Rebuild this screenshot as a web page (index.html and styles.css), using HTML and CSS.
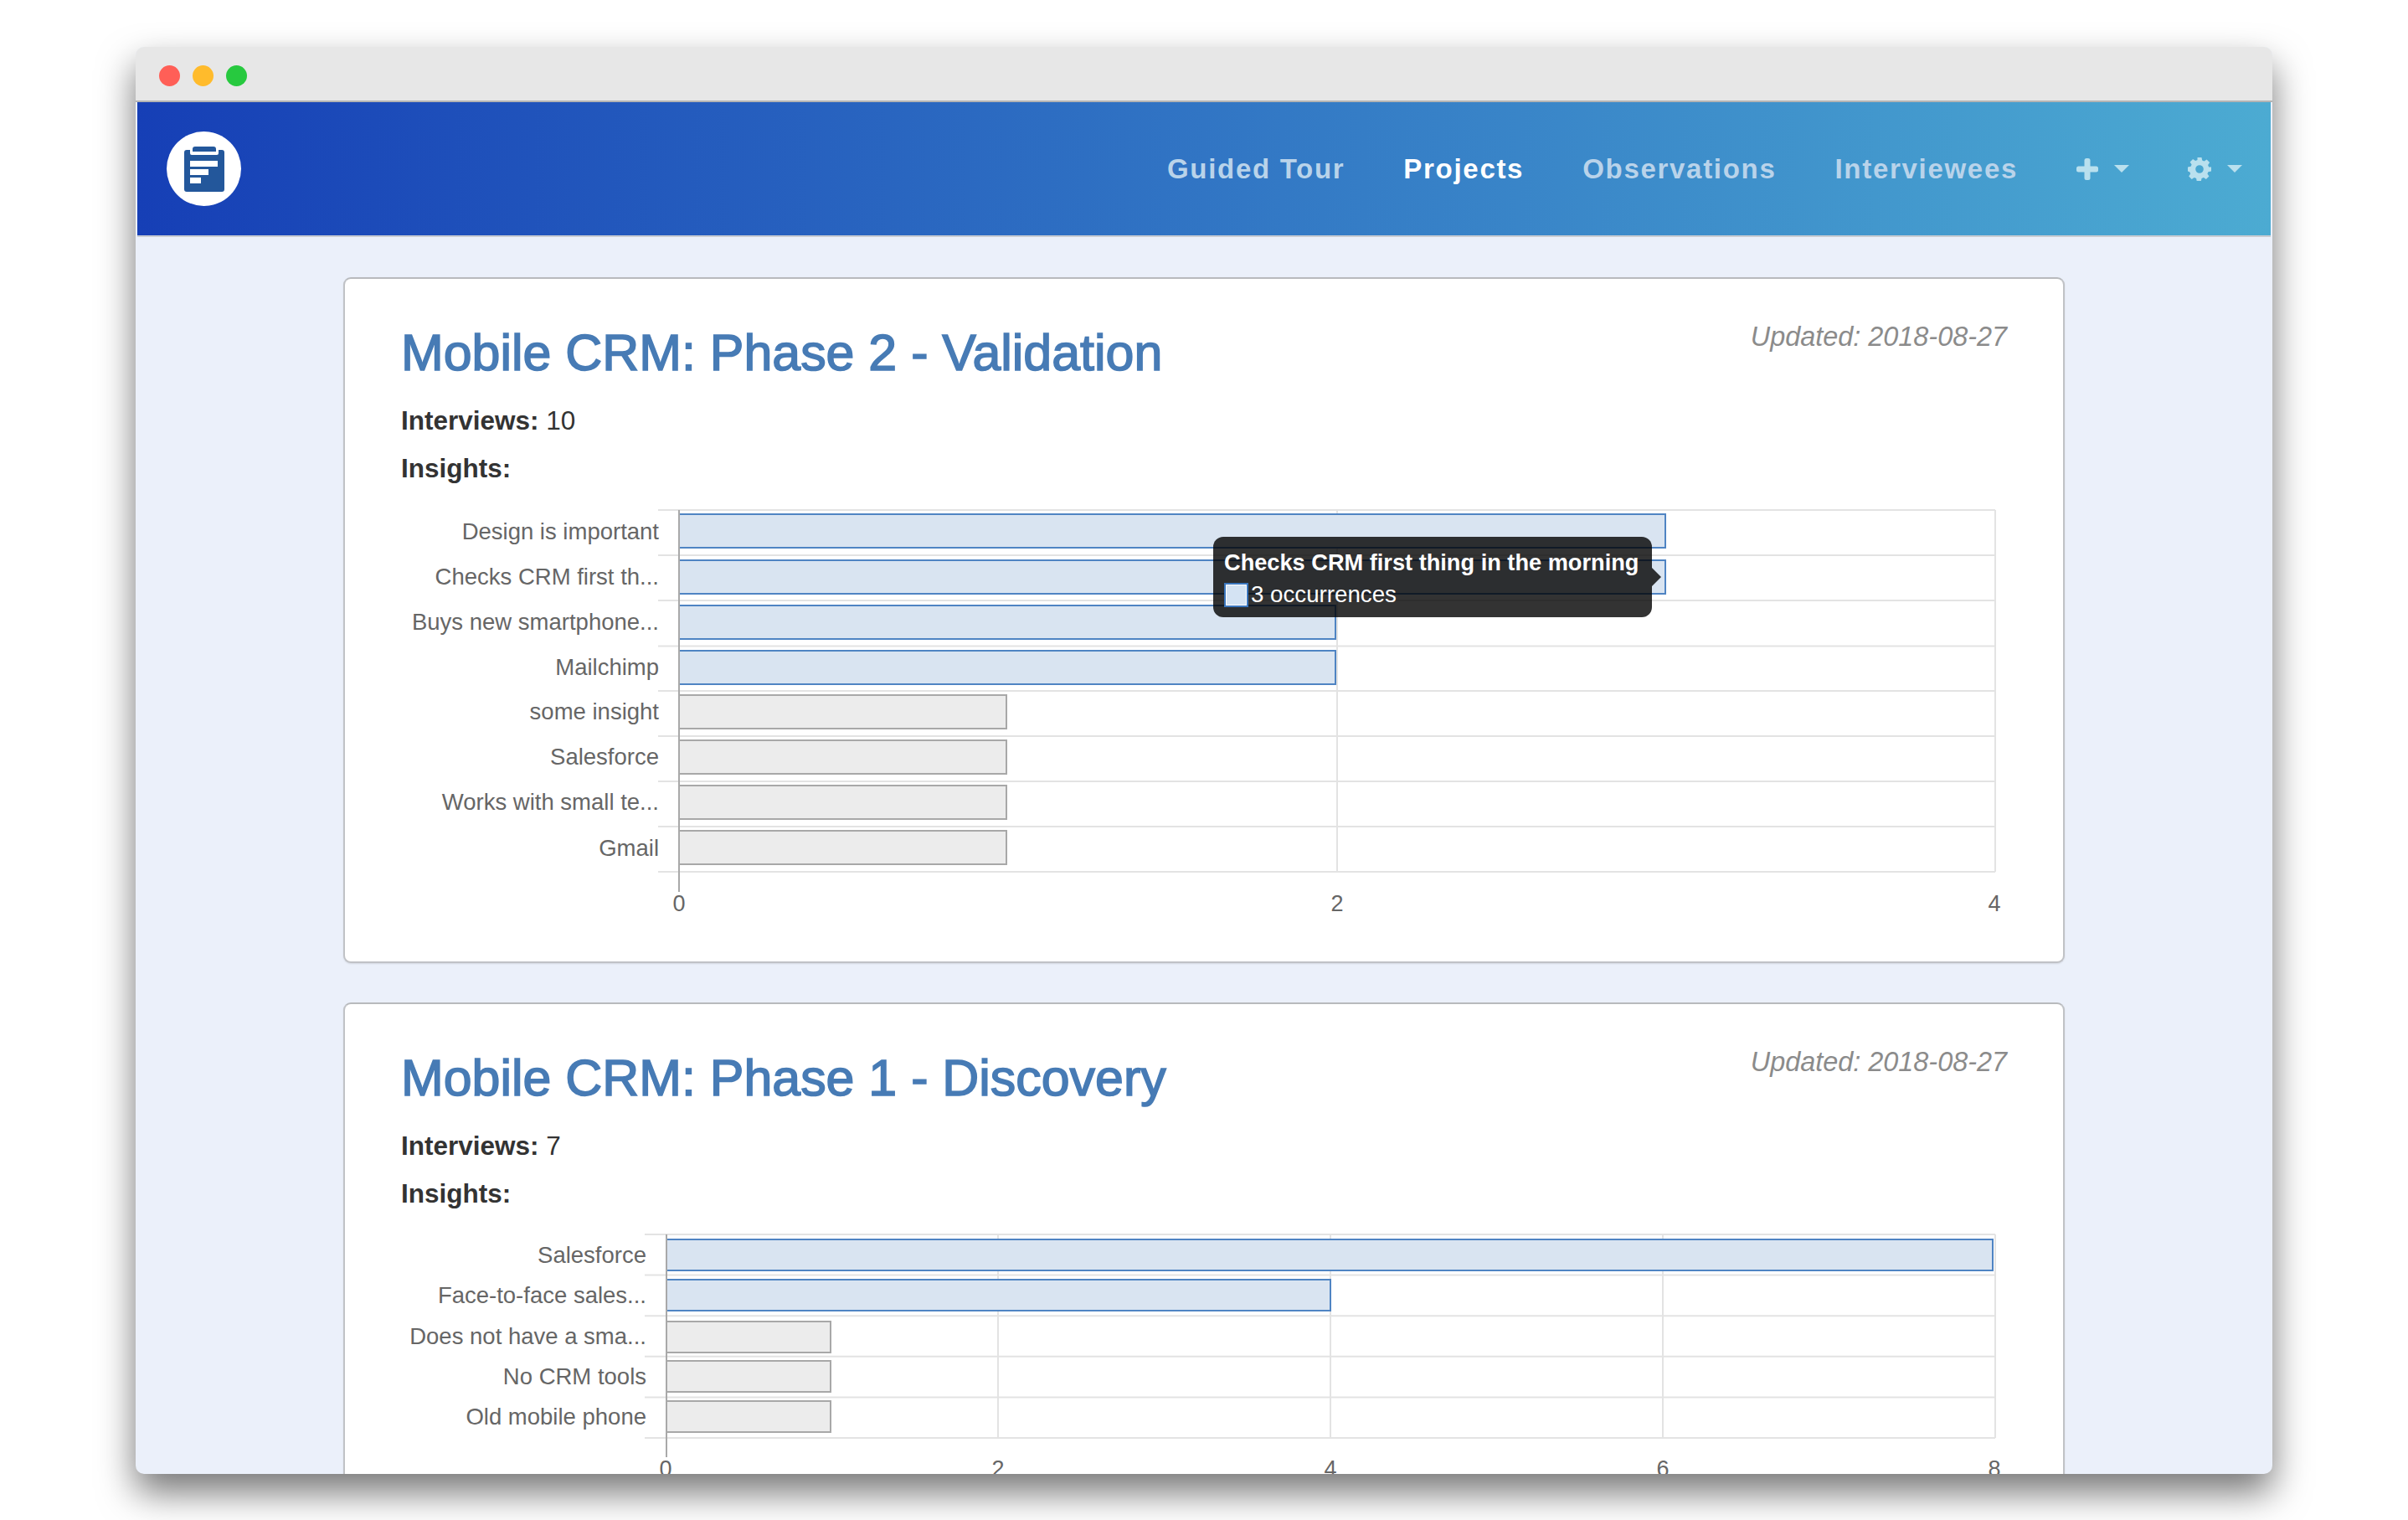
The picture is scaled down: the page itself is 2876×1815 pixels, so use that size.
FILE: index.html
```html
<!DOCTYPE html>
<html lang="en">
<head>
<meta charset="utf-8">
<title>Projects</title>
<link rel="stylesheet" href="styles.css">
</head>
<body>
<div class="window">
  <div class="titlebar">
    <span class="light red"></span><span class="light amber"></span><span class="light green"></span>
  </div>
  <nav class="navbar">
    <div class="logo">
      <svg class="logo-icon" viewBox="0 0 48 54" width="48" height="54">
        <path fill="#23579b" d="M10 3a3 3 0 0 1 3-3h22a3 3 0 0 1 3 3v3H10zM0 7a3 3 0 0 1 3-3h4v4a2 2 0 0 0 2 2h30a2 2 0 0 0 2-2V4h4a3 3 0 0 1 3 3v44a3 3 0 0 1-3 3H3a3 3 0 0 1-3-3z"/>
        <rect fill="#fff" x="7" y="17" width="33" height="7"/>
        <rect fill="#fff" x="7" y="27" width="22" height="7"/>
        <rect fill="#fff" x="7" y="37" width="13" height="7"/>
      </svg>
    </div>
    <div class="nav-links">
      <a class="nav-link">Guided Tour</a>
      <a class="nav-link active">Projects</a>
      <a class="nav-link">Observations</a>
      <a class="nav-link">Interviewees</a>
      <a class="nav-icon">
        <svg width="26" height="26" viewBox="0 0 26 26"><rect fill="currentColor" x="9.500" y="0" width="7" height="26" rx="2.500"/><rect fill="currentColor" x="0" y="9.500" width="26" height="7" rx="2.500"/></svg>
        <i class="caret"></i>
      </a>
      <a class="nav-icon gear">
        <svg width="28" height="28" viewBox="0 0 28 28"><path fill="currentColor" fill-rule="evenodd" d="M11.500 0h5l.7 3.600 2.400 1 3-2 3.500 3.500-2 3 1 2.400L28 11.500v5l-3.600.7-1 2.400 2 3-3.500 3.500-3-2-2.400 1-.7 3.600h-5l-.7-3.600-2.400-1-3 2-3.500-3.500 2-3-1-2.400L0 16.500v-5l3.600-.7 1-2.400-2-3L6.100 1.900l3 2 2.400-1zM14 9.200a4.800 4.800 0 1 0 0 9.600 4.800 4.800 0 0 0 0-9.600z"/></svg>
        <i class="caret"></i>
      </a>
    </div>
  </nav>
  <main class="content">
    <section class="card">
      <div class="card-head">
        <h2 class="card-title">Mobile CRM: Phase 2 - Validation</h2>
        <em class="updated">Updated: 2018-08-27</em>
      </div>
      <p class="stat"><b>Interviews:</b> 10</p>
      <p class="stat"><b>Insights:</b></p>
      <div class="chart-wrap">
        <svg class="chart chart-a" width="1940" height="495" viewBox="0 0 1940 495">
          <g class="grid">
            <path d="M326 3H1923M326 57H1923M326 111H1923M326 165.500H1923M326 219H1923M326 273H1923M326 327H1923M326 381H1923M326 435H1923"/>
            <path d="M1137 3V435M1923 3V435"/>
          </g>
          <g class="bars-hot">
            <rect x="351" y="8" width="1178" height="40"/>
            <rect x="351" y="63" width="1178" height="40"/>
            <rect x="351" y="117" width="784" height="40"/>
            <rect x="351" y="171" width="784" height="40"/>
          </g>
          <g class="bars-cold">
            <rect x="351" y="224" width="391" height="40"/>
            <rect x="351" y="278" width="391" height="40"/>
            <rect x="351" y="332" width="391" height="40"/>
            <rect x="351" y="386" width="391" height="40"/>
          </g>
          <path class="axis" d="M351 3V459"/>
          <g class="labels">
            <text x="327" y="38">Design is important</text>
            <text x="327" y="92">Checks CRM first th...</text>
            <text x="327" y="146">Buys new smartphone...</text>
            <text x="327" y="200">Mailchimp</text>
            <text x="327" y="253">some insight</text>
            <text x="327" y="307">Salesforce</text>
            <text x="327" y="361">Works with small te...</text>
            <text x="327" y="416">Gmail</text>
          </g>
          <g class="ticks">
            <text x="351" y="482">0</text>
            <text x="1137" y="482">2</text>
            <text x="1922" y="482">4</text>
          </g>
        </svg>
        <div class="tooltip">
          <div class="tooltip-title">Checks CRM first thing in the morning</div>
          <div class="tooltip-row"><span class="swatch"></span>3 occurrences</div>
        </div>
      </div>
    </section>
    <section class="card">
      <div class="card-head">
        <h2 class="card-title">Mobile CRM: Phase 1 - Discovery</h2>
        <em class="updated">Updated: 2018-08-27</em>
      </div>
      <p class="stat"><b>Interviews:</b> 7</p>
      <p class="stat"><b>Insights:</b></p>
      <div class="chart-wrap">
        <svg class="chart chart-b" width="1940" height="320" viewBox="0 0 1940 320">
          <g class="grid">
            <path d="M310 2H1923M310 50.600H1923M310 99.200H1923M310 147.800H1923M310 196.400H1923M310 245H1923"/>
            <path d="M732 2V245M1129 2V245M1526 2V245M1923 2V245"/>
          </g>
          <g class="bars-hot">
            <rect x="336" y="8" width="1584" height="37"/>
            <rect x="336" y="56" width="793" height="37"/>
          </g>
          <g class="bars-cold">
            <rect x="336" y="106" width="196" height="37"/>
            <rect x="336" y="153" width="196" height="37"/>
            <rect x="336" y="201" width="196" height="37"/>
          </g>
          <path class="axis" d="M336 2V268"/>
          <g class="labels">
            <text x="312" y="36">Salesforce</text>
            <text x="312" y="84">Face-to-face sales...</text>
            <text x="312" y="133">Does not have a sma...</text>
            <text x="312" y="181">No CRM tools</text>
            <text x="312" y="229">Old mobile phone</text>
          </g>
          <g class="ticks">
            <text x="335" y="291">0</text>
            <text x="732" y="291">2</text>
            <text x="1129" y="291">4</text>
            <text x="1526" y="291">6</text>
            <text x="1922" y="291">8</text>
          </g>
        </svg>
      </div>
    </section>
  </main>
</div>
</body>
</html>
```

FILE: styles.css
```css
* { box-sizing: border-box; }
html, body { margin: 0; background: #fff; }
body {
  height: 1815px;
  padding: 56px 162px 0;
  overflow: hidden;
  font-family: "Liberation Sans", Arial, sans-serif;
}
.window {
  height: 1704px;
  border-radius: 10px;
  overflow: hidden;
  background: #ebf0fa;
  box-shadow: 0 22px 44px rgba(0, 0, 0, .54);
}
.titlebar {
  display: flex;
  align-items: center;
  gap: 15px;
  height: 66px;
  padding: 4px 0 0 28px;
  background: #e7e7e7;
  border-bottom: 2px solid #b4b4b4;
}
.light { width: 25px; height: 25px; border-radius: 50%; }
.red { background: #ff5f57; }
.amber { background: #ffbb2c; }
.green { background: #27c93f; }
.navbar {
  display: flex;
  align-items: center;
  justify-content: space-between;
  height: 159px;
  margin: 0 2px;
  padding: 0 34px 0 35px;
  background: linear-gradient(90deg, #163fb6, #4cabd2);
  box-shadow: 0 2px 0 #c9ccd2;
}
.logo {
  display: flex;
  align-items: center;
  justify-content: center;
  width: 89px;
  height: 89px;
  border-radius: 50%;
  background: #fff;
}
.nav-links {
  display: flex;
  align-items: center;
  gap: 70px;
  color: #b9d3ea;
}
.nav-link {
  font-size: 33px;
  font-weight: 700;
  letter-spacing: 1.700px;
  white-space: nowrap;
}
.nav-link.active { color: #fff; }
.nav-icon {
  display: flex;
  align-items: center;
  gap: 19px;
  color: #b9e0ee;
}
.caret {
  width: 0;
  height: 0;
  border-left: 9px solid transparent;
  border-right: 9px solid transparent;
  border-top: 9px solid currentColor;
}
.content {
  display: flex;
  flex-direction: column;
  gap: 47px;
  padding: 50px 248px 0;
}
.card {
  flex: none;
  height: 819px;
  padding: 53px 67px 0;
  background: #fff;
  border: 2px solid #c0c2c6;
  border-top-color: #b8babd;
  border-radius: 9px;
  box-shadow: 0 1px 2px rgba(0, 0, 0, .1);
}
.card-head {
  display: flex;
  justify-content: space-between;
  align-items: flex-start;
}
.card-title {
  margin: 0;
  font-size: 60.900px;
  line-height: 70px;
  font-weight: 400;
  color: #477bb5;
  -webkit-text-stroke: 1.600px #477bb5;
}
.updated {
  font-size: 32.400px;
  line-height: 32px;
  color: #8b8b8b;
}
.stat {
  margin: 0;
  font-size: 31.500px;
  line-height: 57px;
  color: #333;
}
.stat:first-of-type { margin-top: 18px; }
.chart-wrap {
  position: relative;
  margin: 18px 0 0 -19px;
}
.chart { display: block; }
.grid path { stroke: #e3e3e3; stroke-width: 2; fill: none; }
.bars-hot rect { fill: #d9e4f1; stroke: #4f84c3; stroke-width: 2; }
.bars-cold rect { fill: #ececec; stroke: #a8a8a8; stroke-width: 2; }
.axis { stroke: #a9a9a9; stroke-width: 2; fill: none; }
.labels text { font-size: 27.500px; fill: #666; text-anchor: end; }
.ticks text { font-size: 27px; fill: #666; text-anchor: middle; }
.tooltip {
  position: absolute;
  left: 989px;
  top: 35px;
  width: 524px;
  height: 96px;
  padding: 14px 13px;
  border-radius: 12px;
  background: rgba(0, 0, 0, .8);
  color: #fff;
  font-size: 27.700px;
  line-height: 34px;
}
.tooltip::after {
  content: "";
  position: absolute;
  left: 100%;
  top: 37px;
  border-top: 11px solid transparent;
  border-bottom: 11px solid transparent;
  border-left: 11px solid rgba(0, 0, 0, .8);
}
.tooltip-title { font-size: 27.200px; font-weight: 700; white-space: nowrap; }
.tooltip-row { display: flex; align-items: center; gap: 3px; margin-top: 4px; white-space: nowrap; }
.swatch {
  width: 29px;
  height: 29px;
  background: #d4e3f3;
  border: 2px solid #3a76bd;
  box-shadow: 0 0 0 1px #fff inset;
}
```
